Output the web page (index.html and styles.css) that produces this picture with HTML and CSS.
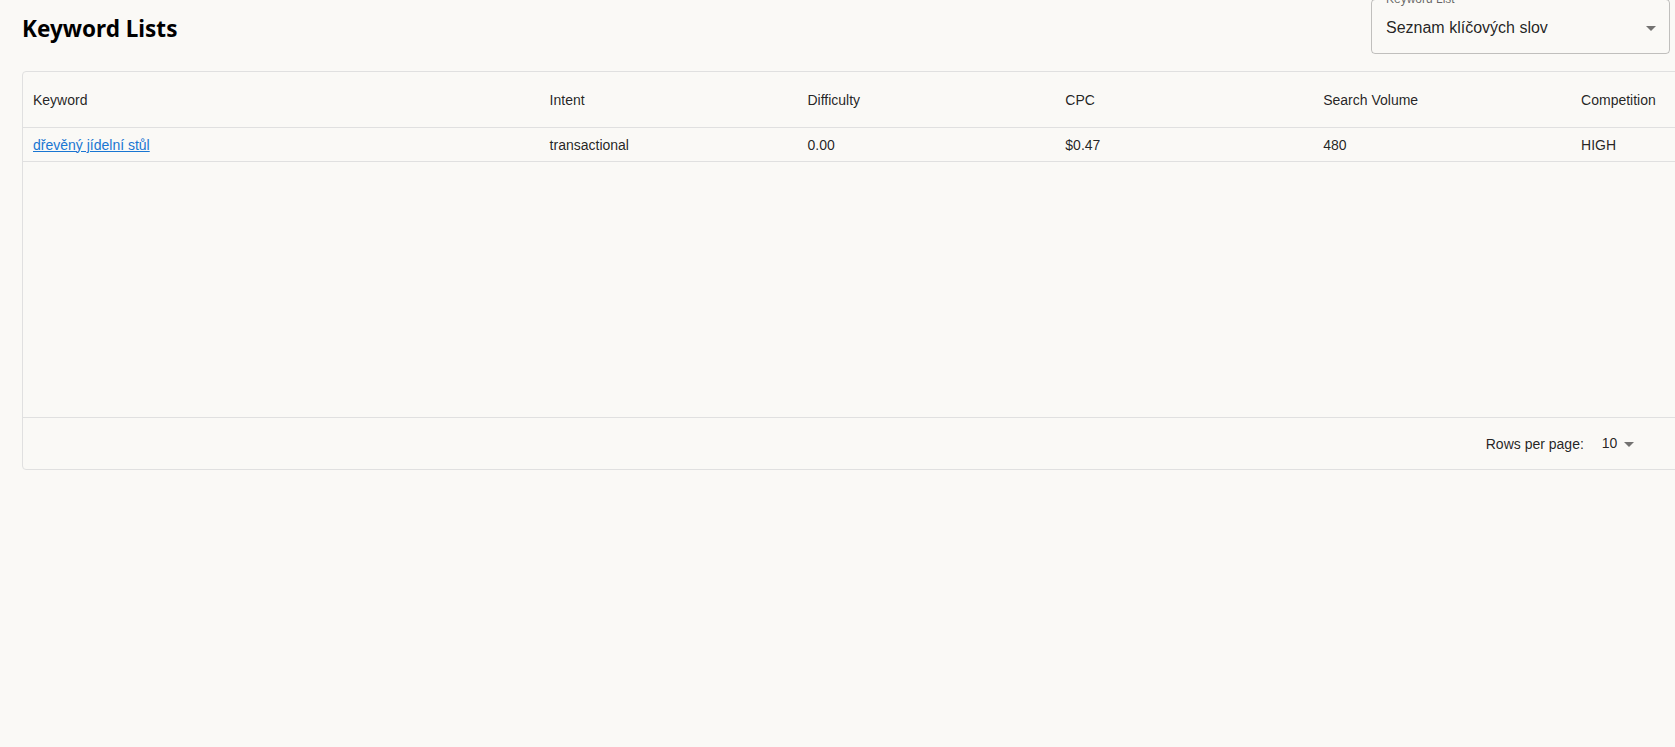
FILE: index.html
```html
<!DOCTYPE html>
<html lang="cs">

<head>
    <meta charset="UTF-8">
    <meta name="viewport" content="width=device-width, initial-scale=1.0">
    <title>Keyword Lists</title>
    <link rel="stylesheet" href="styles.css">
</head>

<body>
    <div class="page">
        <div class="page-header">
            <h1 class="page-title">Keyword Lists</h1>
            <div class="list-select">
                <span class="list-select-label">Keyword List</span>
                <div class="list-select-value">Seznam klíčových slov</div>
                <svg class="select-icon" viewBox="0 0 24 24" width="24" height="24">
                    <path d="M7 10l5 5 5-5z"></path>
                </svg>
            </div>
        </div>

        <div class="table-card">
            <div class="table-wrap">
                <table class="keyword-table">
                    <colgroup>
                        <col class="col-keyword">
                        <col class="col-data">
                        <col class="col-data">
                        <col class="col-data">
                        <col class="col-data">
                        <col class="col-data">
                    </colgroup>
                    <thead>
                        <tr>
                            <th>Keyword</th>
                            <th>Intent</th>
                            <th>Difficulty</th>
                            <th>CPC</th>
                            <th>Search Volume</th>
                            <th>Competition</th>
                        </tr>
                    </thead>
                    <tbody>
                        <tr>
                            <td><a href="#" class="keyword-link">dřevěný jídelní stůl</a></td>
                            <td>transactional</td>
                            <td>0.00</td>
                            <td>$0.47</td>
                            <td>480</td>
                            <td>HIGH</td>
                        </tr>
                    </tbody>
                </table>
            </div>
            <div class="pagination">
                <span class="rows-label">Rows per page:</span>
                <div class="rows-select">
                    <span>10</span>
                    <svg class="rows-icon" viewBox="0 0 24 24" width="24" height="24">
                        <path d="M7 10l5 5 5-5z"></path>
                    </svg>
                </div>
                <span class="rows-count">1–1 of 1</span>
                <div class="page-actions">
                    <button class="page-btn" disabled>
                        <svg viewBox="0 0 24 24" width="24" height="24">
                            <path d="M15.41 7.41 14 6l-6 6 6 6 1.41-1.41L10.83 12z"></path>
                        </svg>
                    </button>
                    <button class="page-btn" disabled>
                        <svg viewBox="0 0 24 24" width="24" height="24">
                            <path d="M10 6 8.59 7.41 13.17 12l-4.58 4.59L10 18l6-6z"></path>
                        </svg>
                    </button>
                </div>
            </div>
        </div>
    </div>
</body>

</html>
```

FILE: styles.css
```css
html,
body {
    margin: 0;
    background: #faf9f6;
    overflow: hidden;
}

body {
    font-family: "Liberation Sans", Arial, sans-serif;
    color: rgba(0, 0, 0, 0.87);
}

.page {
    padding: 0 5px 0 22px;
    overflow: hidden;
}

.page-header {
    display: flex;
    justify-content: space-between;
    align-items: flex-start;
    margin-top: -1px;
}

.page-title {
    margin: 15px 0 0 0;
    font-family: "Noto Sans", sans-serif;
    font-size: 22.5px;
    line-height: 30px;
    font-weight: 700;
    color: #000;
}

.list-select {
    position: relative;
    width: 299px;
    height: 55px;
    box-sizing: border-box;
    border: 1px solid rgba(0, 0, 0, 0.23);
    border-radius: 4px;
}

.list-select-label {
    position: absolute;
    left: 10px;
    top: -7px;
    padding: 0 4px;
    font-size: 12px;
    line-height: 12px;
    color: rgba(0, 0, 0, 0.6);
    background: #faf9f6;
}

.list-select-value {
    padding: 16px 32px 14px 14px;
    font-size: 16px;
    line-height: 23px;
}

.select-icon {
    position: absolute;
    right: 6px;
    top: 16px;
    fill: rgba(0, 0, 0, 0.54);
}

.table-card {
    width: 1806px;
    margin-top: 17px;
    border: 1px solid #e0e0e0;
    border-radius: 4px;
}

.table-wrap {
    height: 345px;
}

.keyword-table {
    width: 100%;
    table-layout: fixed;
    border-collapse: collapse;
    font-size: 14px;
}

.col-keyword {
    width: 516px;
}

.col-data {
    width: 257.6px;
}

.keyword-table th,
.keyword-table td {
    padding: 0 10px;
    text-align: left;
    font-weight: 400;
    border-bottom: 1px solid #e0e0e0;
    white-space: nowrap;
}

.keyword-table th {
    height: 55px;
}

.keyword-table td {
    height: 33px;
}

.keyword-link {
    color: #1976d2;
}

.pagination {
    display: flex;
    justify-content: flex-end;
    align-items: center;
    height: 51px;
    padding-right: 7px;
    border-top: 1px solid #e0e0e0;
    font-size: 14px;
}

.rows-select {
    position: relative;
    margin: 0 44px 0 10px;
    padding: 0 24px 0 8px;
    line-height: 23px;
}

.rows-icon {
    position: absolute;
    right: 0;
    top: 0;
    fill: rgba(0, 0, 0, 0.54);
}

.page-actions {
    display: flex;
    margin-left: 6px;
}

.page-btn {
    width: 40px;
    height: 40px;
    padding: 8px;
    border: none;
    background: none;
    fill: rgba(0, 0, 0, 0.26);
}
```
